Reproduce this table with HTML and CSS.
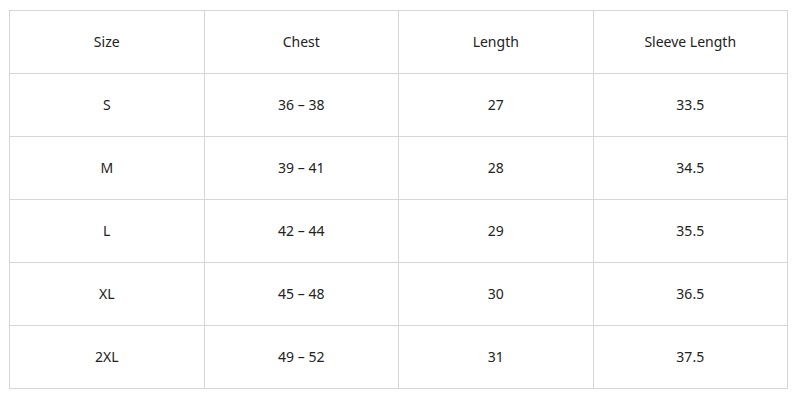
FILE: index.html
```html
<!DOCTYPE html>
<html>
<head>
<meta charset="utf-8">
<link rel="stylesheet" href="styles.css">
</head>
<body>
<table class="size-table">
  <tr><td>Size</td><td>Chest</td><td>Length</td><td>Sleeve Length</td></tr>
  <tr><td>S</td><td>36 – 38</td><td>27</td><td>33.5</td></tr>
  <tr><td>M</td><td>39 – 41</td><td>28</td><td>34.5</td></tr>
  <tr><td>L</td><td>42 – 44</td><td>29</td><td>35.5</td></tr>
  <tr><td>XL</td><td>45 – 48</td><td>30</td><td>36.5</td></tr>
  <tr><td>2XL</td><td>49 – 52</td><td>31</td><td>37.5</td></tr>
</table>
</body>
</html>
```
FILE: styles.css
```css
html, body {
  margin: 0;
  padding: 0;
  background: #ffffff;
}
body {
  padding: 10px 0 0 9px;
}
.size-table {
  border-collapse: collapse;
  width: 779px;
  table-layout: fixed;
  font-family: "Noto Sans", sans-serif;
  font-size: 14px;
  line-height: 18px;
  color: #222222;
}
.size-table td {
  border: 1px solid #d6d6d6;
  height: 62px;
  padding: 0;
  text-align: center;
  vertical-align: middle;
}
```
